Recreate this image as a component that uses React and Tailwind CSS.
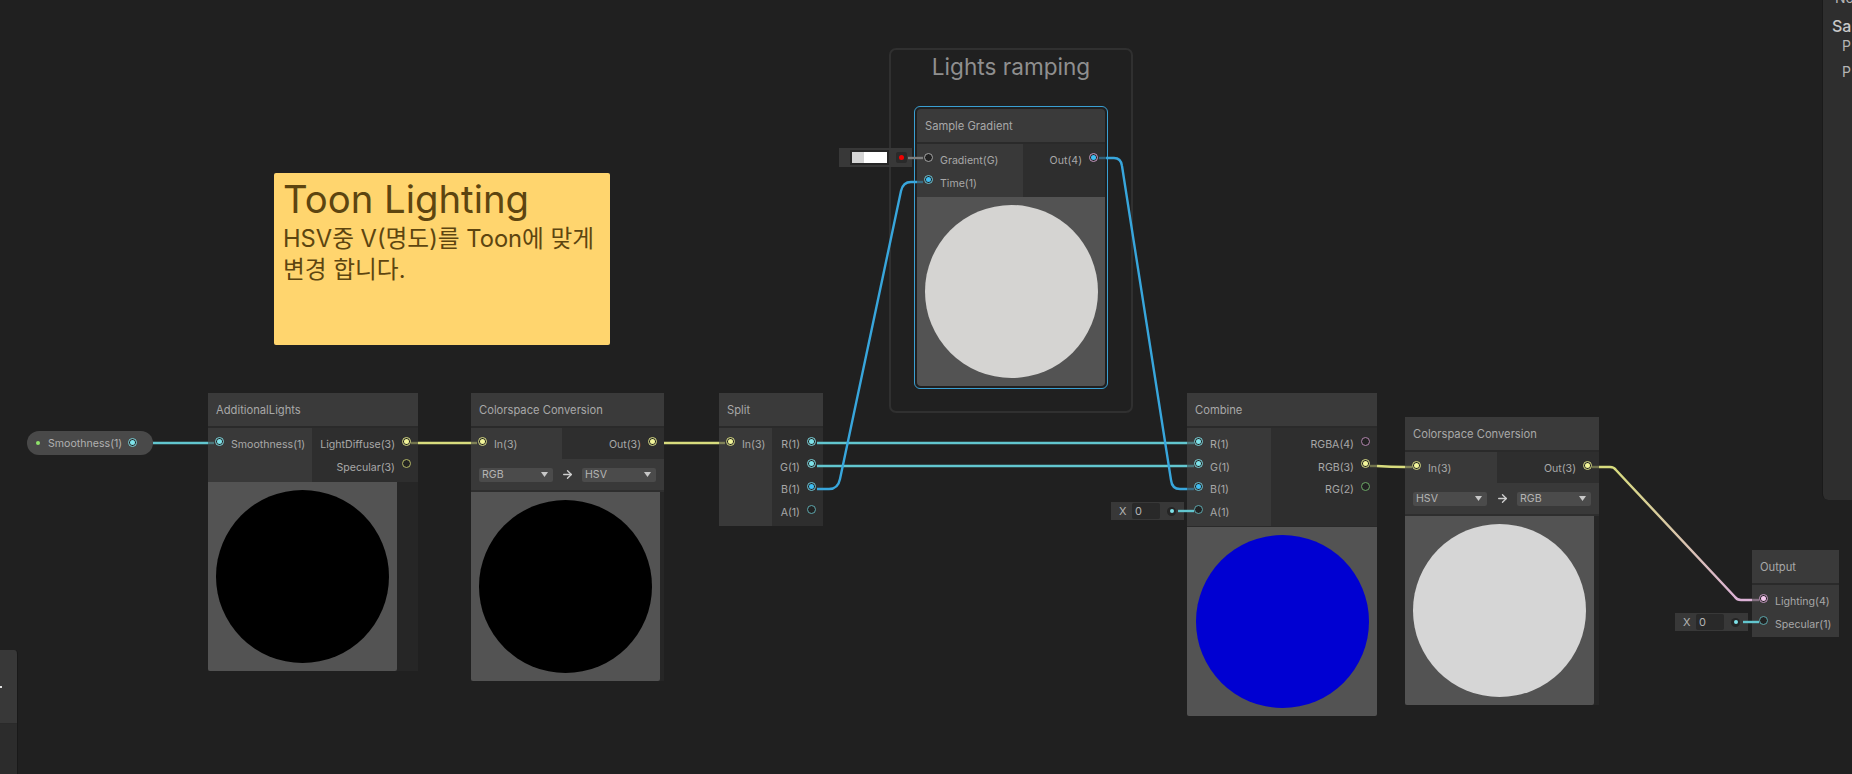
import React from "react";
import { ArrowRight } from "lucide-react";

const PORT = {
  cyan: { ring: "border-[#7fd5dc]", dot: "bg-[#7fe3ea]", off: "border-[#5da7ad]" },
  blue: { ring: "border-[#6fc4d4]", dot: "bg-[#3fbdf2]", off: "border-[#5da7ad]" },
  yellow: { ring: "border-[#d8dc86]", dot: "bg-[#f2f59a]", off: "border-[#b4b867]" },
  pink: { ring: "border-[#c79ac3]", dot: "bg-[#f5c8ee]", off: "border-[#b184ad]" },
  green: { ring: "border-[#79bd72]", dot: "bg-[#79bd72]", off: "border-[#6ca866]" },
  grey: { ring: "border-[#8f8f8f]", dot: "bg-[#8f8f8f]", off: "border-[#a5a5a5]" },
};

function Port({ color, on, over }) {
  const c = PORT[color];
  return (
    <span
      className={`flex h-[9px] w-[9px] shrink-0 items-center justify-center rounded-full border bg-[#222222] mb-[4px] ${on ? c.ring : c.off}`}
    >
      {on && <span className={`h-[5px] w-[5px] rounded-full ${over ? "bg-[#3fbdf2]" : c.dot}`} />}
    </span>
  );
}

function InRow({ label, color, on }) {
  return (
    <div className="flex h-[22.67px] items-center pl-[7px]">
      <Port color={color} on={on} />
      <span className="ml-[7px] whitespace-nowrap pt-[3px]">{label}</span>
    </div>
  );
}

function OutRow({ label, color, on, over }) {
  return (
    <div className="flex h-[22.67px] items-center justify-end pr-[7px]">
      <span className="mr-[7px] whitespace-nowrap pt-[3px]">{label}</span>
      <Port color={color} on={on} over={over} />
    </div>
  );
}

function Header({ title }) {
  return (
    <div className="flex h-[35px] items-center border-b-2 border-[#2a2a2a] bg-[#3a3a3a] pl-[8px] pt-[2px] text-[11.2px] text-[#a8a8a8]">
      {title}
    </div>
  );
}

function Preview({ tone, wide }) {
  return (
    <div className="flex">
      <div
        className={`flex h-[189px] items-center justify-center rounded-b-[2px] bg-[#535353] ${wide ? "w-full" : "w-[189px]"}`}
      >
        <div className={`h-[173px] w-[173px] rounded-full ${tone}`} />
      </div>
    </div>
  );
}

function Select({ label }) {
  return (
    <div className="flex h-[14px] w-[74px] items-center justify-between rounded-[2px] bg-[#4b4b4b] pl-[3px] pr-[5px] text-[10.6px] text-[#b4b4b4]">
      <span>{label}</span>
      <svg width="7" height="5" viewBox="0 0 7 5"><path d="M0 0H7L3.5 5Z" fill="#c8c8c8" /></svg>
    </div>
  );
}

function Controls({ from, to }) {
  return (
    <div className="flex h-[33px] items-center justify-between border-b-2 border-[#2e2e2e] bg-[#393939] px-[8px]">
      <Select label={from} />
      <ArrowRight size={13} strokeWidth={2.5} className="text-[#cfcfcf]" />
      <Select label={to} />
    </div>
  );
}

function ConstInput({ className }) {
  return (
    <div className={`absolute z-10 flex h-[18px] w-[73px] items-center bg-[#383838] text-[11px] text-[#b4b4b4] ${className}`}>
      <span className="ml-[8px] w-[13px]">X</span>
      <span className="flex h-[16px] w-[28px] items-center rounded-[2px] bg-[#292929] pl-[3px]">0</span>
      <span className="ml-[7px] flex h-[9px] w-[9px] items-center justify-center rounded-full bg-[#252525]">
        <span className="h-[4px] w-[4px] rounded-full bg-[#7fe3ea]" />
      </span>
    </div>
  );
}

function Wires() {
  return (
    <svg className="pointer-events-none absolute left-0 top-0 z-30" width="1852" height="774" fill="none">
      <defs>
        <linearGradient id="yp" gradientUnits="userSpaceOnUse" x1="1614" y1="467" x2="1737" y2="600">
          <stop offset="0" stopColor="#d8dc7e" />
          <stop offset="1" stopColor="#dcb2d6" />
        </linearGradient>
      </defs>
      <g strokeWidth="2.4">
        <path d="M153 443H208" stroke="#62c6cf" />
        <path d="M208 443H214" stroke="#62c6cf" strokeOpacity=".45" />
        <path d="M411 443H418" stroke="#d8dc7e" strokeOpacity=".4" />
        <path d="M418 443H471" stroke="#d8dc7e" />
        <path d="M471 443H477" stroke="#d8dc7e" strokeOpacity=".45" />
        <path d="M664 443H719" stroke="#d8dc7e" />
        <path d="M719 443H725" stroke="#d8dc7e" strokeOpacity=".45" />
        <path d="M817 443H1187" stroke="#62c6cf" />
        <path d="M817 466H1187" stroke="#62c6cf" />
        <path d="M1187 443H1194M1187 466H1194" stroke="#62c6cf" strokeOpacity=".45" />
        <path d="M817 489H829Q838 489 840 479L901 191Q903 182 911 182H917" stroke="#38a6dc" />
        <path d="M917 182H923" stroke="#38a6dc" strokeOpacity=".45" />
        <path d="M1099 158H1106" stroke="#38a6dc" strokeOpacity=".45" />
        <path d="M1106 158H1114Q1121 158 1122 166L1171 480Q1172 489 1180 489H1187" stroke="#38a6dc" />
        <path d="M1187 489H1194" stroke="#38a6dc" strokeOpacity=".45" />
        <path d="M1370 466H1377" stroke="#d8dc7e" strokeOpacity=".4" />
        <path d="M1377 466Q1391 467 1405 467" stroke="#d8dc7e" />
        <path d="M1405 467H1412" stroke="#d8dc7e" strokeOpacity=".45" />
        <path d="M1592 467H1599" stroke="#d8dc7e" strokeOpacity=".4" />
        <path d="M1599 467H1610Q1614 467 1616 470L1735 597Q1737 600 1741 600H1752" stroke="url(#yp)" />
        <path d="M1752 600H1759" stroke="#dcb2d6" strokeOpacity=".45" />
        <path d="M1178 511H1194" stroke="#62c6cf" />
        <path d="M1743 622H1759" stroke="#62c6cf" />
        <path d="M908 158H923" stroke="#7d7d7d" />
      </g>
    </svg>
  );
}

export default function App() {
  return (
    <div className="relative h-[774px] w-[1852px] overflow-hidden bg-[#202020] font-['Inter','Noto_Sans_CJK_KR',sans-serif] text-[10.6px] text-[#a8a8a8]">
      {/* Left panel sliver */}
      <div className="absolute bottom-0 left-0 top-[650px] flex w-[18px] flex-col overflow-hidden rounded-tr-[4px] border-r border-[#191919]">
        <div className="flex h-[73px] items-center bg-[#383838] pt-[1px]">
          <span className="h-[2px] w-[2px] bg-[#e0e0e0]" />
        </div>
        <div className="flex-1 border-t border-[#2a2a2a] bg-[#2c2c2c]" />
      </div>

      {/* Right panel sliver */}
      <div className="absolute right-0 top-0 h-[500px] w-[30px] overflow-hidden rounded-bl-[6px] border-l border-[#1a1a1a] bg-[#2e2e2e] text-[#b4b4b4]">
        <div className="mt-[-11px] pl-[12px] text-[14px] leading-[18px]">No</div>
        <div className="mt-[9px] pl-[9px] text-[16px] font-medium leading-[20px] text-[#c8c8c8]">Sa</div>
        <div className="pl-[19px] text-[14px] leading-[20px]">P</div>
        <div className="mt-[6px] pl-[19px] text-[14px] leading-[20px]">P</div>
      </div>

      {/* Sticky note */}
      <div className="absolute left-[274px] top-[173px] h-[172px] w-[336px] rounded-[2px] bg-[#ffd56e] px-[9px] pt-[3px] text-[#5d4510]">
        <div className="text-[38.3px] leading-[46px]">Toon Lighting</div>
        <div className="mt-[1px] w-[320px] break-keep text-[23.7px] leading-[31px]">HSV중 V(명도)를 Toon에 맞게 변경 합니다.</div>
      </div>

      {/* Group */}
      <div className="absolute left-[889px] top-[48px] flex h-[365px] w-[244px] justify-center rounded-[7px] border-2 border-[#303030] pt-[2px] text-[22.6px] leading-[30px] text-[#8f8f8f]">
        Lights ramping
      </div>

      {/* Property */}
      <div className="absolute left-[27px] top-[431px] z-10 flex h-[24px] w-[126px] items-center rounded-full bg-[#494949] pl-[9px] text-[#b0b0b0]">
        <span className="h-[4px] w-[4px] rounded-full bg-[#8fe36b]" />
        <span className="ml-[8px] whitespace-nowrap pt-[2px]">Smoothness(1)</span>
        <span className="mb-[1px] ml-[6px] flex h-[9px] w-[9px] items-center justify-center rounded-full border border-[#7fd5dc] bg-[#222222]">
          <span className="h-[5px] w-[5px] rounded-full bg-[#7fe3ea]" />
        </span>
      </div>

      {/* AdditionalLights */}
      <div className="absolute left-[208px] top-[393px] z-10 w-[210px] bg-[#262626]">
        <Header title="AdditionalLights" />
        <div className="flex h-[54px]">
          <div className="w-[104px] bg-[#393939] pt-[4px]">
            <InRow label="Smoothness(1)" color="cyan" on />
          </div>
          <div className="flex-1 bg-[#2e2e2e] pt-[4px]">
            <OutRow label="LightDiffuse(3)" color="yellow" on />
            <OutRow label="Specular(3)" color="yellow" />
          </div>
        </div>
        <Preview tone="bg-black" />
      </div>

      {/* Colorspace 1 */}
      <div className="absolute left-[471px] top-[393px] z-10 w-[193px] bg-[#262626]">
        <Header title="Colorspace Conversion" />
        <div className="flex h-[31px]">
          <div className="w-[91px] bg-[#393939] pt-[4px]">
            <InRow label="In(3)" color="yellow" on />
          </div>
          <div className="flex-1 bg-[#2e2e2e] pt-[4px]">
            <OutRow label="Out(3)" color="yellow" on />
          </div>
        </div>
        <Controls from="RGB" to="HSV" />
        <Preview tone="bg-black" />
      </div>

      {/* Split */}
      <div className="absolute left-[719px] top-[393px] z-10 w-[104px]">
        <Header title="Split" />
        <div className="flex h-[98px]">
          <div className="w-[53px] bg-[#393939] pt-[4px]">
            <InRow label="In(3)" color="yellow" on />
          </div>
          <div className="flex-1 bg-[#2e2e2e] pt-[4px]">
            <OutRow label="R(1)" color="cyan" on />
            <OutRow label="G(1)" color="cyan" on />
            <OutRow label="B(1)" color="blue" on />
            <OutRow label="A(1)" color="cyan" />
          </div>
        </div>
      </div>

      {/* Sample Gradient */}
      <div className="absolute left-[914px] top-[106px] z-10 w-[194px] rounded-[6px] border border-[#3a9fd2] p-[2px]">
        <div className="overflow-hidden rounded-[4px]">
          <Header title="Sample Gradient" />
          <div className="flex h-[53px]">
            <div className="w-[106px] bg-[#393939] pt-[4px]">
              <InRow label="Gradient(G)" color="grey" />
              <InRow label="Time(1)" color="blue" on />
            </div>
            <div className="flex-1 bg-[#2e2e2e] pt-[4px]">
              <OutRow label="Out(4)" color="pink" on over />
            </div>
          </div>
          <Preview tone="bg-[#d5d4d2]" wide />
        </div>
      </div>

      {/* Gradient input */}
      <div className="absolute left-[839px] top-[148px] z-20 flex h-[19px] w-[73px] items-center bg-[#383838]">
        <div className="ml-[11px] flex h-[15px] w-[39px] border-2 border-[#262626]">
          <span className="w-[12px] bg-[#d4d4d4]" />
          <span className="flex-1 bg-white" />
        </div>
        <span className="ml-[7px] flex h-[11px] w-[11px] items-center justify-center rounded-[2px] bg-[#2a2a2a]">
          <span className="h-[5px] w-[5px] rounded-full bg-[#f00000]" />
        </span>
      </div>

      {/* Combine */}
      <div className="absolute left-[1187px] top-[393px] z-10 w-[190px]">
        <Header title="Combine" />
        <div className="flex h-[98px]">
          <div className="w-[84px] bg-[#393939] pt-[4px]">
            <InRow label="R(1)" color="cyan" on />
            <InRow label="G(1)" color="cyan" on />
            <InRow label="B(1)" color="blue" on />
            <InRow label="A(1)" color="cyan" />
          </div>
          <div className="flex-1 bg-[#2e2e2e] pt-[4px]">
            <OutRow label="RGBA(4)" color="pink" />
            <OutRow label="RGB(3)" color="yellow" on />
            <OutRow label="RG(2)" color="green" />
          </div>
        </div>
        <div className="h-[1px] bg-[#2a2a2a]" />
        <Preview tone="bg-[#0000d2]" wide />
      </div>
      <ConstInput className="left-[1111px] top-[502px]" />

      {/* Colorspace 2 */}
      <div className="absolute left-[1405px] top-[417px] z-10 w-[194px] bg-[#262626]">
        <Header title="Colorspace Conversion" />
        <div className="flex h-[31px]">
          <div className="w-[92px] bg-[#393939] pt-[4px]">
            <InRow label="In(3)" color="yellow" on />
          </div>
          <div className="flex-1 bg-[#2e2e2e] pt-[4px]">
            <OutRow label="Out(3)" color="yellow" on />
          </div>
        </div>
        <Controls from="HSV" to="RGB" />
        <Preview tone="bg-[#d6d6d6]" />
      </div>

      {/* Output */}
      <div className="absolute left-[1752px] top-[550px] z-10 w-[87px]">
        <Header title="Output" />
        <div className="h-[52px] bg-[#393939] pt-[4px]">
          <InRow label="Lighting(4)" color="pink" on />
          <InRow label="Specular(1)" color="cyan" />
        </div>
      </div>
      <ConstInput className="left-[1675px] top-[613px]" />

      <Wires />
    </div>
  );
}
